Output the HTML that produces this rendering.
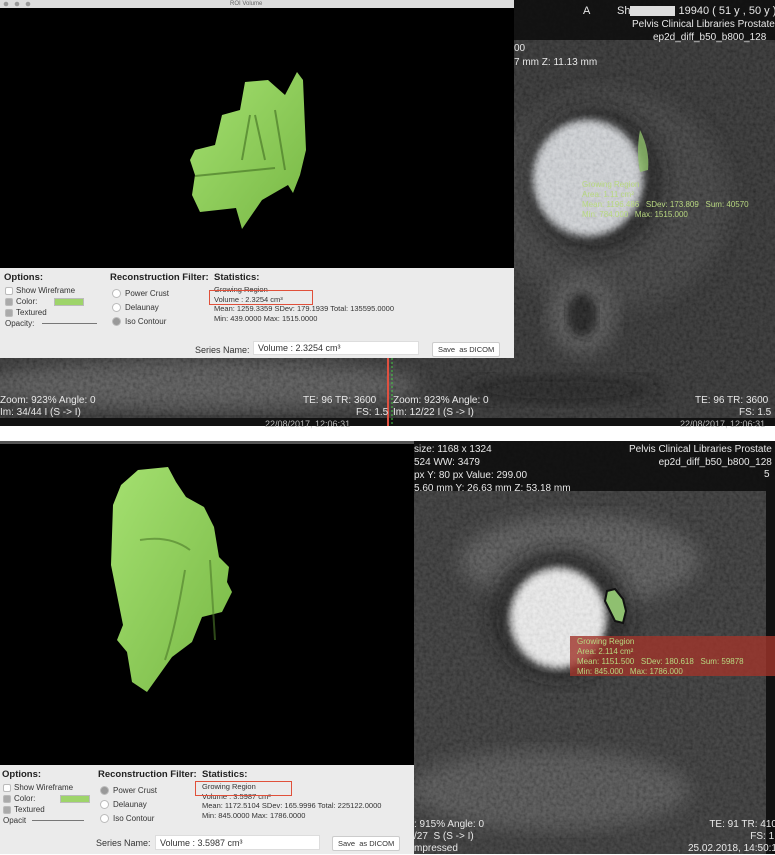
<!DOCTYPE html>
<html><head><meta charset="utf-8"><style>
*{margin:0;padding:0;box-sizing:border-box}
body{width:775px;height:854px;background:#fff;position:relative;overflow:hidden;font-family:"Liberation Sans",sans-serif}
.abs{position:absolute}
.t{position:absolute;color:#e8e8e8;font-size:11px;white-space:nowrap;line-height:12px}
.panel{position:absolute;background:#ebebeb;color:#333;font-size:8px}
.panel b{font-size:9.5px;color:#222}
.cb{display:inline-block;width:8px;height:8px;border:1px solid #bbb;background:#fff;vertical-align:middle;margin-right:3px;border-radius:2px}
.cb.on{background:#aaa}
.rb{display:inline-block;width:9px;height:9px;border:1px solid #bbb;background:#fff;border-radius:50%;vertical-align:middle;margin-right:4px}
.rb.on{background:#999}
.field{position:absolute;background:#fff;border:1px solid #ddd;font-size:9px;padding:2px 4px;color:#333}
.btn{position:absolute;background:#fff;border:1px solid #ccc;font-size:7.5px;padding:2px 5px;color:#333;border-radius:2px}
.red{position:absolute;border:1.5px solid #e0503a}
.g{position:absolute;color:#b8d880;font-size:8px;white-space:nowrap;line-height:10px}
</style></head><body>
<svg class="abs" style="left:0;top:0" width="775" height="854">
<defs>
<filter id="n" x="0" y="0" width="100%" height="100%"><feTurbulence type="fractalNoise" baseFrequency="0.3" numOctaves="2" seed="3"/><feColorMatrix values="1 0 0 0 0 1 0 0 0 0 1 0 0 0 0 0 0 0 0 1"/></filter>
<filter id="b4"><feGaussianBlur stdDeviation="4"/></filter>
<filter id="b8"><feGaussianBlur stdDeviation="9"/></filter>
<linearGradient id="gr" x1="0" y1="0" x2="1" y2="1"><stop offset="0" stop-color="#a4e070"/><stop offset="1" stop-color="#78b845"/></linearGradient>
<clipPath id="c1"><rect x="0" y="0" width="775" height="426"/></clipPath>
<clipPath id="c2"><rect x="414" y="441" width="361" height="413"/></clipPath>
</defs>
<g clip-path="url(#c1)">
<rect x="0" y="0" width="775" height="426" fill="#262626"/>
<ellipse cx="610" cy="200" rx="120" ry="110" fill="#333" filter="url(#b8)"/>
<ellipse cx="595" cy="180" rx="68" ry="72" fill="#161616" filter="url(#b8)"/>
<ellipse cx="588" cy="178" rx="55" ry="58" fill="#c8cbcf" filter="url(#b4)"/>
<ellipse cx="582" cy="315" rx="35" ry="40" fill="#444" filter="url(#b8)"/>
<ellipse cx="582" cy="315" rx="15" ry="22" fill="#141414" filter="url(#b4)"/>
<ellipse cx="200" cy="385" rx="220" ry="25" fill="#4a4a4a" filter="url(#b8)"/>
<ellipse cx="560" cy="390" rx="100" ry="15" fill="#121212" filter="url(#b8)"/>
<rect x="0" y="0" width="775" height="426" filter="url(#n)" opacity="0.22" style="mix-blend-mode:overlay"/>
<rect x="0" y="0" width="775" height="426" filter="url(#n)" opacity="0.12"/>
<rect x="514" y="0" width="261" height="40" fill="#0c0c0c" opacity="0.85"/>
<rect x="0" y="418" width="775" height="8" fill="#111"/>
<path d="M640 130 q10 20 8 40 l-8 2 q-4-20 0-42z" fill="#8fbf6a" opacity="0.8"/>
<rect x="387" y="358" width="2" height="68" fill="#e05040"/>
<line x1="392" y1="358" x2="392" y2="426" stroke="#4c4" stroke-dasharray="2 2"/>
</g>
<g clip-path="url(#c2)">
<rect x="414" y="441" width="361" height="413" fill="#2c2c2c"/>
<ellipse cx="580" cy="560" rx="120" ry="45" fill="#4a4a4a" filter="url(#b8)"/>
<ellipse cx="560" cy="615" rx="70" ry="65" fill="#181818" filter="url(#b8)"/>
<ellipse cx="558" cy="618" rx="48" ry="50" fill="#e8e8e8" filter="url(#b4)"/>
<ellipse cx="550" cy="790" rx="140" ry="40" fill="#444" filter="url(#b8)"/>
<rect x="414" y="441" width="361" height="413" filter="url(#n)" opacity="0.22" style="mix-blend-mode:overlay"/>
<rect x="414" y="441" width="361" height="413" filter="url(#n)" opacity="0.12"/>
<rect x="414" y="441" width="361" height="50" fill="#0a0a0a" opacity="0.85"/>
<rect x="766" y="480" width="9" height="374" fill="#111"/>
<rect x="570" y="636" width="205" height="40" fill="#a0342a" opacity="0.8"/>
<path d="M607 591 l8 -2 l8 10 l3 12 l-3 12 l-8 -2 l-6 -12 l-4 -8z" fill="#8fc070" stroke="#111" stroke-width="2"/>
</g>
<rect x="0" y="0" width="514" height="358" fill="#000"/>
<rect x="0" y="0" width="514" height="8" fill="#ddd"/>
<circle cx="6" cy="4" r="2.3" fill="#999"/><circle cx="17" cy="4" r="2.3" fill="#999"/><circle cx="28" cy="4" r="2.3" fill="#999"/>
<path d="M245 82 L268 80 L285 95 L297 72 L303 80 L306 150 L300 175 L293 193 L288 185 L262 200 L242 229 L236 208 L200 212 L192 195 L195 175 L190 160 L195 150 L215 145 L222 115 L240 110z" fill="url(#gr)"/>
<path d="M195 176 L275 168 M255 115 L265 160 M250 115 L242 160 M275 110 L285 170" stroke="#4c7a2a" stroke-width="2" fill="none" opacity="0.7"/>
<rect x="0" y="441" width="414" height="324" fill="#000"/>
<rect x="0" y="441" width="414" height="3" fill="#555"/>
<path d="M138 470 l30 -3 l8 15 l10 15 l18 10 l10 20 l5 30 l10 10 l-2 15 l5 10 l-10 20 l-20 5 l-10 25 l-20 15 l-25 35 l-15 -10 l-5 -30 l-10 -12 l6 -15 l-12 -60 l2 -60 l8 -20z" fill="url(#gr)"/>
<path d="M140 540 q30 -5 50 10 M185 570 q-10 60 -20 90 M210 560 l5 80" stroke="#4c7a2a" stroke-width="2" fill="none" opacity="0.6"/>
</svg>
<div class="t" style="left:230px;top:0;font-size:6px;color:#666;line-height:8px">ROI Volume</div>
<div class="t" style="left:583px;top:5px">A</div>
<div class="t" style="left:617px;top:5px">Sh<span style="display:inline-block;width:45px;height:10px;background:#ddd;vertical-align:middle"></span> 19940 ( 51 y , 50 y )</div>
<div class="t" style="left:632px;top:19px;font-size:10px">Pelvis Clinical Libraries Prostate</div>
<div class="t" style="left:653px;top:32px;font-size:10px">ep2d_diff_b50_b800_128</div>
<div class="t" style="left:514px;top:43px;font-size:10px">00</div>
<div class="t" style="left:514px;top:57px;font-size:10px">7 mm Z: 11.13 mm</div>
<div class="g" style="left:582px;top:180px">Growing Region<br>Area: 1.11 cm²<br>Mean: 1196.486 &nbsp; SDev: 173.809 &nbsp; Sum: 40570<br>Min: 784.000 &nbsp; Max: 1515.000</div>
<div class="t" style="left:0;top:395px;font-size:10px">Zoom: 923% Angle: 0<br>Im: 34/44 I (S -&gt; I)</div>
<div class="t" style="left:303px;top:395px;font-size:10px">TE: 96 TR: 3600<br><span style="padding-left:53px">FS: 1.5</span></div>
<div class="t" style="left:393px;top:395px;font-size:10px">Zoom: 923% Angle: 0<br>Im: 12/22 I (S -&gt; I)</div>
<div class="t" style="left:695px;top:395px;font-size:10px">TE: 96 TR: 3600<br><span style="padding-left:44px">FS: 1.5</span></div>
<div class="t" style="left:265px;top:418px;font-size:9px;color:#bbb">22/08/2017, 12:06:31</div>
<div class="t" style="left:680px;top:418px;font-size:9px;color:#bbb">22/08/2017, 12:06:31</div>
<div class="panel" style="left:0;top:268px;width:514px;height:90px">
<div class="abs" style="left:4px;top:4px"><b>Options:</b></div>
<div class="abs" style="left:5px;top:17px;line-height:11px"><span class="cb"></span>Show Wireframe<br><span class="cb on"></span>Color: <span style="display:inline-block;width:30px;height:8px;background:#9ed46a;border:1px solid #bbb;margin-left:14px;vertical-align:middle"></span><br><span class="cb on"></span>Textured<br>Opacity: <span style="display:inline-block;width:55px;height:1px;background:#777;vertical-align:middle;margin-left:5px"></span></div>
<div class="abs" style="left:110px;top:4px"><b>Reconstruction Filter:</b></div>
<div class="abs" style="left:112px;top:19px;line-height:14px"><span class="rb"></span>Power Crust<br><span class="rb"></span>Delaunay<br><span class="rb on"></span>Iso Contour</div>
<div class="abs" style="left:214px;top:4px"><b>Statistics:</b></div>
<div class="abs" style="left:214px;top:17px;line-height:9.5px;font-size:7.5px">Growing Region<br>Volume : 2.3254 cm³<br>Mean: 1259.3359 SDev: 179.1939 Total: 135595.0000<br>Min: 439.0000 Max: 1515.0000</div>
<div class="abs" style="left:195px;top:77px;font-size:9px">Series Name:</div>
<div class="field" style="left:253px;top:73px;width:166px;height:14px;padding-top:1px">Volume : 2.3254 cm³</div>
<div class="btn" style="left:432px;top:74px">Save &nbsp;as DICOM</div>
</div>
<div class="red" style="left:209px;top:290px;width:104px;height:15px"></div>
<div class="t" style="left:414px;top:443px;font-size:10px;line-height:13px">size: 1168 x 1324<br>524 WW: 3479<br>px Y: 80 px Value: 299.00<br>5.60 mm Y: 26.63 mm Z: 53.18 mm</div>
<div class="t" style="left:629px;top:443px;font-size:10px;text-align:right;line-height:13px">Pelvis Clinical Libraries Prostate<br><span style="padding-left:22px">ep2d_diff_b50_b800_128</span></div>
<div class="t" style="left:764px;top:469px;font-size:10px">5</div>
<div class="g" style="left:577px;top:637px">Growing Region<br>Area: 2.114 cm²<br>Mean: 1151.500 &nbsp; SDev: 180.618 &nbsp; Sum: 59878<br>Min: 845.000 &nbsp; Max: 1786.000</div>
<div class="t" style="left:414px;top:819px;font-size:10px">: 915% Angle: 0<br>/27 &nbsp;S (S -&gt; I)<br>mpressed</div>
<div class="t" style="left:688px;top:819px;font-size:10px;text-align:right">TE: 91 TR: 4100<br>FS: 1.5<br>25.02.2018, 14:50:19</div>
<div class="panel" style="left:0;top:765px;width:414px;height:89px">
<div class="abs" style="left:2px;top:4px"><b>Options:</b></div>
<div class="abs" style="left:3px;top:17px;line-height:11px"><span class="cb"></span>Show Wireframe<br><span class="cb on"></span>Color: <span style="display:inline-block;width:30px;height:8px;background:#9ed46a;border:1px solid #bbb;margin-left:22px;vertical-align:middle"></span><br><span class="cb on"></span>Textured<br>Opacit <span style="display:inline-block;width:52px;height:1px;background:#777;vertical-align:middle;margin-left:4px"></span></div>
<div class="abs" style="left:98px;top:4px"><b>Reconstruction Filter:</b></div>
<div class="abs" style="left:100px;top:19px;line-height:14px"><span class="rb on"></span>Power Crust<br><span class="rb"></span>Delaunay<br><span class="rb"></span>Iso Contour</div>
<div class="abs" style="left:202px;top:4px"><b>Statistics:</b></div>
<div class="abs" style="left:202px;top:17px;line-height:9.5px;font-size:7.5px">Growing Region<br>Volume : 3.5987 cm³<br>Mean: 1172.5104 SDev: 165.9996 Total: 225122.0000<br>Min: 845.0000 Max: 1786.0000</div>
<div class="abs" style="left:96px;top:73px;font-size:9px">Series Name:</div>
<div class="field" style="left:155px;top:70px;width:165px;height:15px">Volume : 3.5987 cm³</div>
<div class="btn" style="left:332px;top:71px">Save &nbsp;as DICOM</div>
</div>
<div class="red" style="left:195px;top:781px;width:97px;height:15px"></div>
</body></html>
